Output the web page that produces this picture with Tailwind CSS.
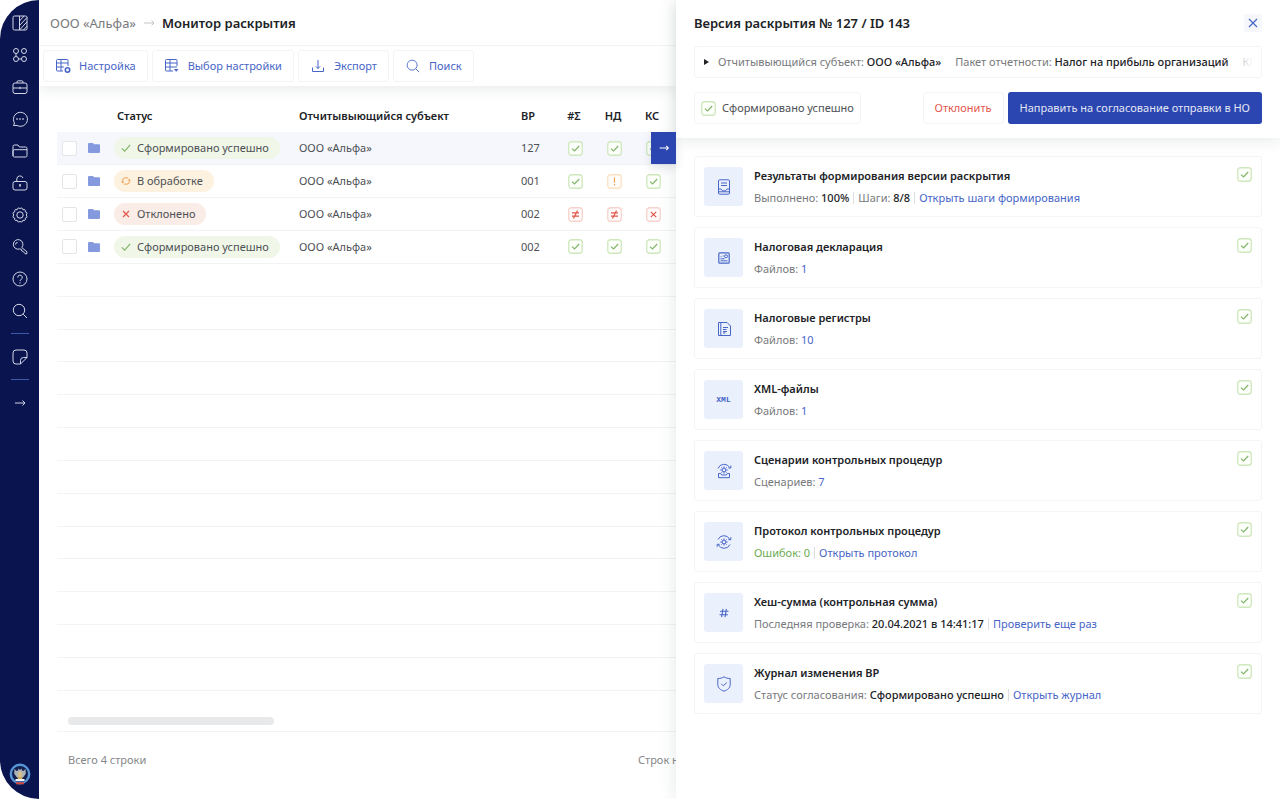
<!DOCTYPE html>
<html lang="ru">
<head>
<meta charset="utf-8">
<meta name="viewport" content="width=device-width, initial-scale=1">
<title>Монитор раскрытия</title>
<script src="https://cdn.jsdelivr.net/npm/@tailwindcss/browser@4"></script>
</head>
<body class="bg-white font-['Noto_Sans',sans-serif] text-[11px] leading-4 text-[#4d5054]">

<svg class="hidden" aria-hidden="true">
  <symbol id="ok" viewBox="0 0 15 15"><rect x=".75" y=".75" width="13.5" height="13.5" rx="2.8" fill="#fcfffa" stroke="#cfe8bd" stroke-width="1.3"/><path d="M4 7.6 6.5 10 11.2 5" fill="none" stroke="#83b56b" stroke-width="1.2"/></symbol>
  <symbol id="warn" viewBox="0 0 15 15"><rect x=".75" y=".75" width="13.5" height="13.5" rx="2.8" fill="#fffdfa" stroke="#fbe2c4" stroke-width="1.3"/><path d="M7.5 3.5v5.2M7.5 10v1.4" stroke="#f0a050" stroke-width="1.2"/></symbol>
  <symbol id="neq" viewBox="0 0 15 15"><rect x=".75" y=".75" width="13.5" height="13.5" rx="2.8" fill="#fffbfa" stroke="#f8d3cd" stroke-width="1.3"/><path d="M4 5.9h7M4 9.1h7M9.5 3.5 5.5 11.5" stroke="#e4564c" stroke-width="1.2"/></symbol>
  <symbol id="bad" viewBox="0 0 15 15"><rect x=".75" y=".75" width="13.5" height="13.5" rx="2.8" fill="#fffbfa" stroke="#f8d3cd" stroke-width="1.3"/><path d="m4.8 4.8 5.4 5.4M10.200 4.800 4.800 10.200" stroke="#e4564c" stroke-width="1.2"/></symbol>
  <symbol id="folder" viewBox="0 0 12 10"><path d="M1 0h3.800l1.400 1.300H11a1 1 0 0 1 1 1V9a1 1 0 0 1-1 1H1a1 1 0 0 1-1-1V1a1 1 0 0 1 1-1z" fill="#8499de"/></symbol>
  <symbol id="tick" viewBox="0 0 10 10"><path d="M.8 5.300 3.700 8.200 9.200 1.800" fill="none" stroke="#83b56b" stroke-width="1.200"/></symbol>
  <symbol id="cross" viewBox="0 0 10 10"><path d="m2 2 6 6M8 2 2 8" stroke="#e4564c" stroke-width="1.200"/></symbol>
  <symbol id="cycle" viewBox="0 0 10 10"><path d="M1.700 6.500V4.200A2.300 2.300 0 0 1 4 1.900h3.200M8.300 3.500v2.300A2.300 2.300 0 0 1 6 8.100H2.800M.4 5.500l1.300 1.300L3 5.500M7 4.500l1.300-1.300 1.300 1.300" fill="none" stroke="#f0a050" stroke-width="1"/></symbol>
  <symbol id="lens" viewBox="0 0 16 16"><circle cx="7" cy="7" r="5.700"/><path d="m11.200 11.200 3.800 3.800"/></symbol>
  <symbol id="arrow" viewBox="0 0 16 16"><path d="M3 8h10M10.500 5.500 13 8l-2.500 2.500"/></symbol>
  <symbol id="gear" viewBox="0 0 8 8"><circle cx="4" cy="4" r="1.900"/><path d="M4 .3v1.500M4 6.200v1.500M.3 4h1.500M6.200 4h1.500M1.400 1.400l1 1M5.600 5.600l1 1M6.600 1.400l-1 1M2.400 5.600l-1 1"/></symbol>
</svg>

<div class="flex h-screen min-h-[799px] overflow-hidden">

  <nav aria-label="Главное меню" class="flex w-[39px] shrink-0 flex-col items-center rounded-l-[40px] bg-[#0a154f] pt-[15px] pb-[14px]">
    <div class="flex flex-col gap-4 text-[#d3d6e6] [&_svg]:size-4 [&_svg]:fill-none [&_svg]:stroke-current">
      <button class="block" aria-label="Панель"><svg viewBox="0 0 16 16"><rect x="1" y="1" width="14" height="14" rx="1.500"/><path d="M7.500 1v14M7.500 6 12 1M7.500 10.500 15 2.500M7.500 15 15 6.800M11.500 15l3.500-3.800"/></svg></button>
      <button class="block" aria-label="Модули"><svg viewBox="0 0 16 16"><circle cx="4" cy="4" r="2.500"/><circle cx="12" cy="4" r="2.500"/><circle cx="4" cy="12" r="2.500"/><circle cx="12" cy="12" r="2.500"/><path d="M4 6.500v3M6.500 12h3"/></svg></button>
      <button class="block" aria-label="Портфель"><svg viewBox="0 0 16 16"><rect x="1" y="4" width="14" height="10.500" rx="2"/><path d="M5 4V3a1.200 1.200 0 0 1 1.200-1.200h3.600A1.200 1.200 0 0 1 11 3v1M1 9h14M8 7.800v2.400"/></svg></button>
      <button class="block" aria-label="Сообщения"><svg viewBox="0 0 16 16"><path d="M1.500 14.500 2.500 12A7 7 0 1 1 5 14.400z" stroke-linejoin="round"/><path d="M4.300 8h1.400M7.300 8h1.400M10.300 8h1.400" stroke-width="1.500"/></svg></button>
      <button class="block" aria-label="Папки"><svg viewBox="0 0 16 16"><path d="M1 12.500v-9A1.500 1.500 0 0 1 2.500 2H6l1.500 2h6A1.500 1.500 0 0 1 15 5.500v7a1.500 1.500 0 0 1-1.500 1.500h-11A1.500 1.500 0 0 1 1 12.500zM1 13V8a1.300 1.300 0 0 1 1.300-1.300H15"/></svg></button>
      <button class="block" aria-label="Доступ"><svg viewBox="0 0 16 16"><rect x="1" y="6.500" width="14" height="8.500" rx="2"/><path d="M4.800 6.500V4a3.200 3.200 0 0 1 6.200-1M8 9.500v2.500"/><circle cx="8" cy="10" r=".6"/></svg></button>
      <button class="block" aria-label="Параметры"><svg viewBox="0 0 16 16"><circle cx="8" cy="8" r="3.200"/><path d="M8 1.700c1.100-1.400 3-.6 3 1.200 1.300-1.100 3.200.3 2.200 1.900 1.700-.1 2.500 1.900 1 3.200 1.500 1.300.7 3.300-1 3.200 1 1.600-.9 3-2.200 1.900 0 1.800-1.900 2.600-3 1.200-1.100 1.400-3 .6-3-1.200-1.300 1.100-3.200-.3-2.200-1.900-1.700.1-2.500-1.900-1-3.200-1.500-1.300-.7-3.300 1-3.200-1-1.600.9-3 2.200-1.900 0-1.800 1.900-2.600 3-1.200z"/></svg></button>
      <button class="block" aria-label="Ключи"><svg viewBox="0 0 16 16"><path d="M9.800 8.500a4.800 4.800 0 1 0-2.300 1.500l1.800.2.500 1.800 1.500.5L13 14.700l1.700.2.300-2z" stroke-linejoin="round"/><path d="M3.500 5.500a2 2 0 0 1 2-2"/></svg></button>
      <button class="block" aria-label="Справка"><svg viewBox="0 0 16 16"><circle cx="8" cy="8" r="7"/><path d="M5.700 6.500a2.300 2.300 0 1 1 3.300 2c-.7.400-1 .7-1 1.500M8 11.200v1.300"/></svg></button>
      <button class="block" aria-label="Поиск по системе"><svg><use href="#lens"/></svg></button>
    </div>
    <hr class="mt-[14px] w-[18px] border-[#3c5aa8]">
    <button class="mt-[15px] text-[#d3d6e6]" aria-label="Заметки"><svg class="size-4 fill-none stroke-current" viewBox="0 0 16 16"><path d="M15 8.500V4a3 3 0 0 0-3-3H4a3 3 0 0 0-3 3v8a3 3 0 0 0 3 3h4.500zM15 8.500h-3.500a3 3 0 0 0-3 3V15"/></svg></button>
    <hr class="mt-[14px] w-[18px] border-[#3c5aa8]">
    <button class="mt-[15px] text-[#d3d6e6]" aria-label="Развернуть меню"><svg class="size-4 fill-none stroke-current"><use href="#arrow"/></svg></button>
    <svg class="mt-auto size-[22px]" viewBox="0 0 22 22" role="img" aria-label="Герб ведомства">
      <circle cx="11" cy="11" r="9.200" fill="#14214f" stroke="#5796d6" stroke-width="2.400"/>
      <path d="M5.500 6 7.500 8 9 7.500 9.500 5.500 11 7l1.500-1.500.5 2 1.500.5 2-2 .3 4.500-2.300 3.500h-7l-2.300-3.500z" fill="#aeb3b8"/>
      <path d="M9.300 9h3.400v4l-1.700 2-1.700-2z" fill="#d9bf85"/><path d="M8 14h6l-1 2H9z" fill="#c9ab68"/>
      <path d="M6.500 16h9v2h-9z" fill="#f2f4f8"/><path d="M6.500 18h9v1.300h-9z" fill="#3c66b0"/><path d="M7 19.300h8v2H7z" fill="#d2453c"/>
    </svg>
  </nav>

  <main class="flex min-w-0 flex-1 flex-col overflow-hidden whitespace-nowrap">
    <header class="relative z-10 bg-white shadow-[0_4px_12px_rgba(60,75,75,0.10)]">
      <div class="flex h-[46px] items-center border-b border-[#f2f3f4] pl-[11px] text-[13px]">
        <a href="#" class="text-[#77797c]">ООО «Альфа»</a>
        <svg class="mx-[5px] size-4 fill-none stroke-[#c3c5c7]"><use href="#arrow"/></svg>
        <h1 class="font-semibold text-[#202226]">Монитор раскрытия</h1>
      </div>
      <div class="flex gap-1 py-1 pl-1 text-[#4765c7] [&_button]:flex [&_button]:h-8 [&_button]:items-center [&_button]:rounded-[3px] [&_button]:border [&_button]:border-[#f3f4f6] [&_button]:px-[11px] [&_svg]:size-4 [&_svg]:fill-none [&_svg]:stroke-current">
        <button class="gap-2"><svg viewBox="0 0 16 16"><path d="M8 13H2.500A1 1 0 0 1 1.500 12V2.500a1 1 0 0 1 1-1H12a1 1 0 0 1 1 1V8M1.500 5H13M1.500 9H9M6 1.500V13"/><circle cx="12.500" cy="12" r="2.200" stroke-width="1.600"/></svg>Настройка</button>
        <button class="gap-2"><svg viewBox="0 0 16 16"><path d="M9 13H2.500A1 1 0 0 1 1.500 12V2.500a1 1 0 0 1 1-1H12a1 1 0 0 1 1 1V8M1.500 5H13M1.500 9H13M6 1.500V13"/><path d="M9.800 11h4.800l-2.400 2.800z" fill="currentColor" stroke="none"/></svg>Выбор настройки</button>
        <button class="gap-2"><svg viewBox="0 0 16 16"><path d="M2.500 9.500v4h11v-4M8 2v8.500M5.800 8.300 8 10.500l2.200-2.200"/></svg>Экспорт</button>
        <button class="gap-2"><svg class="p-px"><use href="#lens"/></svg>Поиск</button>
      </div>
    </header>

    <section aria-label="Версии раскрытия" class="flex min-h-0 flex-1 flex-col pt-[14px] pl-[18px]">
      <table class="h-[591px] w-full table-fixed border-collapse text-left [&_td]:p-0 [&_th]:p-0 [&_th]:font-semibold [&_th]:text-[#202226] [&_tbody_tr]:border-b [&_tbody_tr]:border-[#f2f3f4] [&_td>svg]:size-[15px] [&_tr]:h-8">
        <colgroup><col class="w-6"><col class="w-[27px]"><col class="w-[185px]"><col class="w-[222px]"><col class="w-[41px]"><col class="w-[39px]"><col class="w-[39px]"><col class="w-[39px]"><col></colgroup>
        <thead>
          <tr><th></th><th></th><th><span class="pl-[9px]">Статус</span></th><th><span class="pl-[6px]">Отчитывыющийся субъект</span></th><th><span class="pl-[6px]">ВР</span></th><th class="text-center"><span class="pr-[3px]">#Σ</span></th><th class="text-center"><span class="pr-[3px]">НД</span></th><th class="text-center"><span class="pr-[3px]">КС</span></th><th></th></tr>
        </thead>
        <tbody>
          <tr class="bg-[#f6f7fd]">
            <td><input type="checkbox" aria-label="Выбрать версию 127" class="ml-[5px] block size-[15px] appearance-none rounded-[2px] border border-[#e3e5e8] bg-white"></td>
            <td><svg class="ml-[7px] h-[10px]! w-3!"><use href="#folder"/></svg></td>
            <td><span class="ml-[6px] inline-flex h-[22px] items-center gap-[6px] rounded-full bg-[#f0f7e8] pr-[11px] pl-[7px]"><svg class="size-[10px]"><use href="#tick"/></svg>Сформировано успешно</span></td>
            <td><span class="pl-[6px]">ООО «Альфа»</span></td><td><span class="pl-[6px]">127</span></td>
            <td><svg class="mx-auto"><use href="#ok"/></svg></td><td><svg class="mx-auto"><use href="#ok"/></svg></td><td><svg class="mx-auto"><use href="#ok"/></svg></td><td></td>
          </tr>
          <tr>
            <td><input type="checkbox" aria-label="Выбрать версию 001" class="ml-[5px] block size-[15px] appearance-none rounded-[2px] border border-[#e3e5e8] bg-white"></td>
            <td><svg class="ml-[7px] h-[10px]! w-3!"><use href="#folder"/></svg></td>
            <td><span class="ml-[6px] inline-flex h-[22px] items-center gap-[6px] rounded-full bg-[#fdf2df] pr-[11px] pl-[7px]"><svg class="size-[10px]"><use href="#cycle"/></svg>В обработке</span></td>
            <td><span class="pl-[6px]">ООО «Альфа»</span></td><td><span class="pl-[6px]">001</span></td>
            <td><svg class="mx-auto"><use href="#ok"/></svg></td><td><svg class="mx-auto"><use href="#warn"/></svg></td><td><svg class="mx-auto"><use href="#ok"/></svg></td><td></td>
          </tr>
          <tr>
            <td><input type="checkbox" aria-label="Выбрать отклонённую версию 002" class="ml-[5px] block size-[15px] appearance-none rounded-[2px] border border-[#e3e5e8] bg-white"></td>
            <td><svg class="ml-[7px] h-[10px]! w-3!"><use href="#folder"/></svg></td>
            <td><span class="ml-[6px] inline-flex h-[22px] items-center gap-[6px] rounded-full bg-[#faece7] pr-[11px] pl-[7px]"><svg class="size-[10px]"><use href="#cross"/></svg>Отклонено</span></td>
            <td><span class="pl-[6px]">ООО «Альфа»</span></td><td><span class="pl-[6px]">002</span></td>
            <td><svg class="mx-auto"><use href="#neq"/></svg></td><td><svg class="mx-auto"><use href="#neq"/></svg></td><td><svg class="mx-auto"><use href="#bad"/></svg></td><td></td>
          </tr>
          <tr>
            <td><input type="checkbox" aria-label="Выбрать версию 002" class="ml-[5px] block size-[15px] appearance-none rounded-[2px] border border-[#e3e5e8] bg-white"></td>
            <td><svg class="ml-[7px] h-[10px]! w-3!"><use href="#folder"/></svg></td>
            <td><span class="ml-[6px] inline-flex h-[22px] items-center gap-[6px] rounded-full bg-[#f0f7e8] pr-[11px] pl-[7px]"><svg class="size-[10px]"><use href="#tick"/></svg>Сформировано успешно</span></td>
            <td><span class="pl-[6px]">ООО «Альфа»</span></td><td><span class="pl-[6px]">002</span></td>
            <td><svg class="mx-auto"><use href="#ok"/></svg></td><td><svg class="mx-auto"><use href="#ok"/></svg></td><td><svg class="mx-auto"><use href="#ok"/></svg></td><td></td>
          </tr>
          <tr><td colspan="9"></td></tr><tr><td colspan="9"></td></tr><tr><td colspan="9"></td></tr><tr><td colspan="9"></td></tr>
          <tr><td colspan="9"></td></tr><tr><td colspan="9"></td></tr><tr><td colspan="9"></td></tr><tr><td colspan="9"></td></tr>
          <tr><td colspan="9"></td></tr><tr><td colspan="9"></td></tr><tr><td colspan="9"></td></tr><tr><td colspan="9"></td></tr>
          <tr><td colspan="9"></td></tr>
        </tbody>
      </table>
      <div class="border-b border-[#f2f3f4] pt-[26px] pb-[6px] pl-[11px]"><div class="h-2 w-[206px] rounded-full bg-[#e8e9eb]"></div></div>
      <footer class="flex h-14 items-center justify-between pl-[11px] text-[#85878a]">
        <span>Всего 4 строки</span><span class="w-[38px]">Строк на странице</span>
      </footer>
    </section>
  </main>

  <aside aria-label="Версия раскрытия" class="relative z-20 flex w-[604px] shrink-0 flex-col bg-white whitespace-nowrap shadow-[0_0_16px_rgba(60,75,75,0.14)]">
    <button aria-label="Свернуть панель" class="absolute top-[132px] right-full flex h-8 w-[25px] items-center justify-center bg-[#2b46b0] shadow-[0_4px_10px_rgba(60,75,95,0.15)]"><svg class="size-[14px] fill-none stroke-white stroke-[1.2]" viewBox="0 0 16 16"><use href="#arrow"/></svg></button>
    <header class="px-[18px] pb-[14px] shadow-[0_4px_12px_rgba(60,75,75,0.10)]">
      <div class="flex h-[46px] items-center justify-between">
        <h2 class="text-[13px] font-semibold text-[#202226]">Версия раскрытия № 127 / ID 143</h2>
        <button aria-label="Закрыть" class="flex size-[18px] items-center justify-center rounded-[2px] bg-[#f5f7fb]"><svg class="size-[10px] fill-none stroke-[#4765c7] stroke-[1.2]" viewBox="0 0 10 10"><path d="m1 1 8 8M9 1 1 9"/></svg></button>
      </div>
      <button class="relative flex h-8 w-full items-center overflow-hidden rounded-[3px] border border-[#f3f4f6] pl-[9px] text-[#77797c]">
        <svg class="mr-[9px] h-[6px] w-[5px] shrink-0" viewBox="0 0 5 6"><path d="M0 0l5 3-5 3z" fill="#202226"/></svg>
        <span>Отчитывыющийся субъект: <span class="font-medium text-[#202226]">ООО «Альфа»</span></span>
        <span class="ml-[14px]">Пакет отчетности: <span class="font-medium text-[#202226]">Налог на прибыль организаций</span></span>
        <span class="ml-[14px]">КПП: 770201001</span>
        <span class="absolute inset-y-0 right-0 w-9 bg-linear-to-r from-white/0 to-white to-80%"></span>
      </button>
      <div class="mt-[14px] flex items-center gap-1">
        <span class="mr-auto flex h-8 items-center gap-[6px] rounded-[3px] border border-[#f3f4f6] px-[6px]"><svg class="size-[15px]"><use href="#ok"/></svg>Сформировано успешно</span>
        <button class="h-8 rounded-[3px] border border-[#f3f4f6] px-[11px] text-[#e4564c]">Отклонить</button>
        <button class="h-8 rounded-[3px] bg-[#2b46b0] px-3 text-[#e3e7f5]">Направить на согласование отправки в НО</button>
      </div>
    </header>

    <ul class="flex flex-col gap-[10px] px-[18px] pt-[18px] text-[#77797c] [&_a]:text-[#4765c7] [&_b]:font-medium [&_b]:text-[#202226] [&_h3]:font-semibold [&_h3]:text-[#202226] [&_h3]:mb-[6px] [&_i]:mx-1 [&_i]:inline-block [&_i]:h-3 [&_i]:w-px [&_i]:bg-[#dcdee0] [&_i]:align-[-2px] [&>li]:flex [&>li]:h-[61px] [&>li]:items-start [&>li]:rounded-[3px] [&>li]:border [&>li]:border-[#f3f4f6] [&>li]:px-[9px] [&>li]:pt-[10px] [&>li>span]:mr-[11px] [&>li>span]:flex [&>li>span]:size-[39px] [&>li>span]:items-center [&>li>span]:justify-center [&>li>span]:rounded-[3px] [&>li>span]:bg-[#ebf0fd] [&>li>span]:text-[#4765c7] [&>li>span>svg]:size-4 [&>li>span>svg]:fill-none [&>li>span>svg]:stroke-current [&>li>svg]:ml-auto [&>li>svg]:size-[15px] [&>li>div]:pt-px">
      <li><span><svg viewBox="0 0 16 16"><rect x="2.500" y=".8" width="11" height="14.400" rx="1.200"/><path d="M5 4h6M5 6.500h6M2.500 10h2.500l1.500 1.800h3L11 10h2.500M2.500 12.800h11"/></svg></span>
        <div><h3>Результаты формирования версии раскрытия</h3><p>Выполнено: <b>100%</b><i></i>Шаги: <b>8/8</b><i></i><a href="#">Открыть шаги формирования</a></p></div><svg><use href="#ok"/></svg></li>
      <li><span><svg viewBox="0 0 16 16"><rect x="2.800" y="2.800" width="10.400" height="10.400" rx="1" stroke-width="1.200"/><path d="M4.500 10.800h7M4.500 8.800h4M4.500 6.800h1M6.500 6h1.200"/><circle cx="10" cy="6.300" r="1.500"/></svg></span>
        <div><h3>Налоговая декларация</h3><p>Файлов: <a href="#">1</a></p></div><svg><use href="#ok"/></svg></li>
      <li><span><svg viewBox="0 0 16 16"><path d="M2.500 1.500H11l3.500 3.500v9.500h-12zM4.800 1.500v13M7 6.500h5M7 8.500h3.500M7 10.500h4M7 12h2.500"/></svg></span>
        <div><h3>Налоговые регистры</h3><p>Файлов: <a href="#">10</a></p></div><svg><use href="#ok"/></svg></li>
      <li><span class="font-['Liberation_Mono',monospace] text-[8px] font-bold">XML</span>
        <div><h3>XML-файлы</h3><p>Файлов: <a href="#">1</a></p></div><svg><use href="#ok"/></svg></li>
      <li><span><svg viewBox="0 0 16 16"><path d="M2 5.500a6.500 6.500 0 0 1 11.700-1M14.800 2.500V5h-2.500M2.500 10.500v4.200h11v-4.200h-2.200l-1 1.500H5.700l-1-1.500z"/><use href="#gear" x="4" y="3" width="8" height="8"/></svg></span>
        <div><h3>Сценарии контрольных процедур</h3><p>Сценариев: <a href="#">7</a></p></div><svg><use href="#ok"/></svg></li>
      <li><span><svg viewBox="0 0 16 16"><path d="M2 5.500a6.500 6.500 0 0 1 11.700-.3M14.800 3.200v2.500h-2.500M14 10.500a6.500 6.500 0 0 1-11.700.3M1.200 12.800v-2.500h2.500"/><use href="#gear" x="4" y="4" width="8" height="8"/></svg></span>
        <div><h3>Протокол контрольных процедур</h3><p><strong class="font-normal text-[#6bab52]">Ошибок: 0</strong><i></i><a href="#">Открыть протокол</a></p></div><svg><use href="#ok"/></svg></li>
      <li><span><svg viewBox="0 0 16 16"><path d="M4 6.300h8.500M3.500 9.700H12M7 3.800l-1.400 8.400M10.400 3.800 9 12.200" stroke-width="1.100"/></svg></span>
        <div><h3>Хеш-сумма (контрольная сумма)</h3><p>Последняя проверка: <b>20.04.2021 в 14:41:17</b><i></i><a href="#">Проверить еще раз</a></p></div><svg><use href="#ok"/></svg></li>
      <li><span><svg viewBox="0 0 16 16"><path d="M8 .8c1.800 1.200 3.800 1.700 6.200 1.700v6c0 3.500-2.700 5.500-6.200 6.700-3.500-1.200-6.200-3.200-6.200-6.700v-6C4.200 2.500 6.200 2 8 .8zM5.300 7.800l2 2 3.500-3.200"/></svg></span>
        <div><h3>Журнал изменения ВР</h3><p>Статус согласования: <b>Сформировано успешно</b><i></i><a href="#">Открыть журнал</a></p></div><svg><use href="#ok"/></svg></li>
    </ul>
  </aside>
</div>
</body>
</html>
